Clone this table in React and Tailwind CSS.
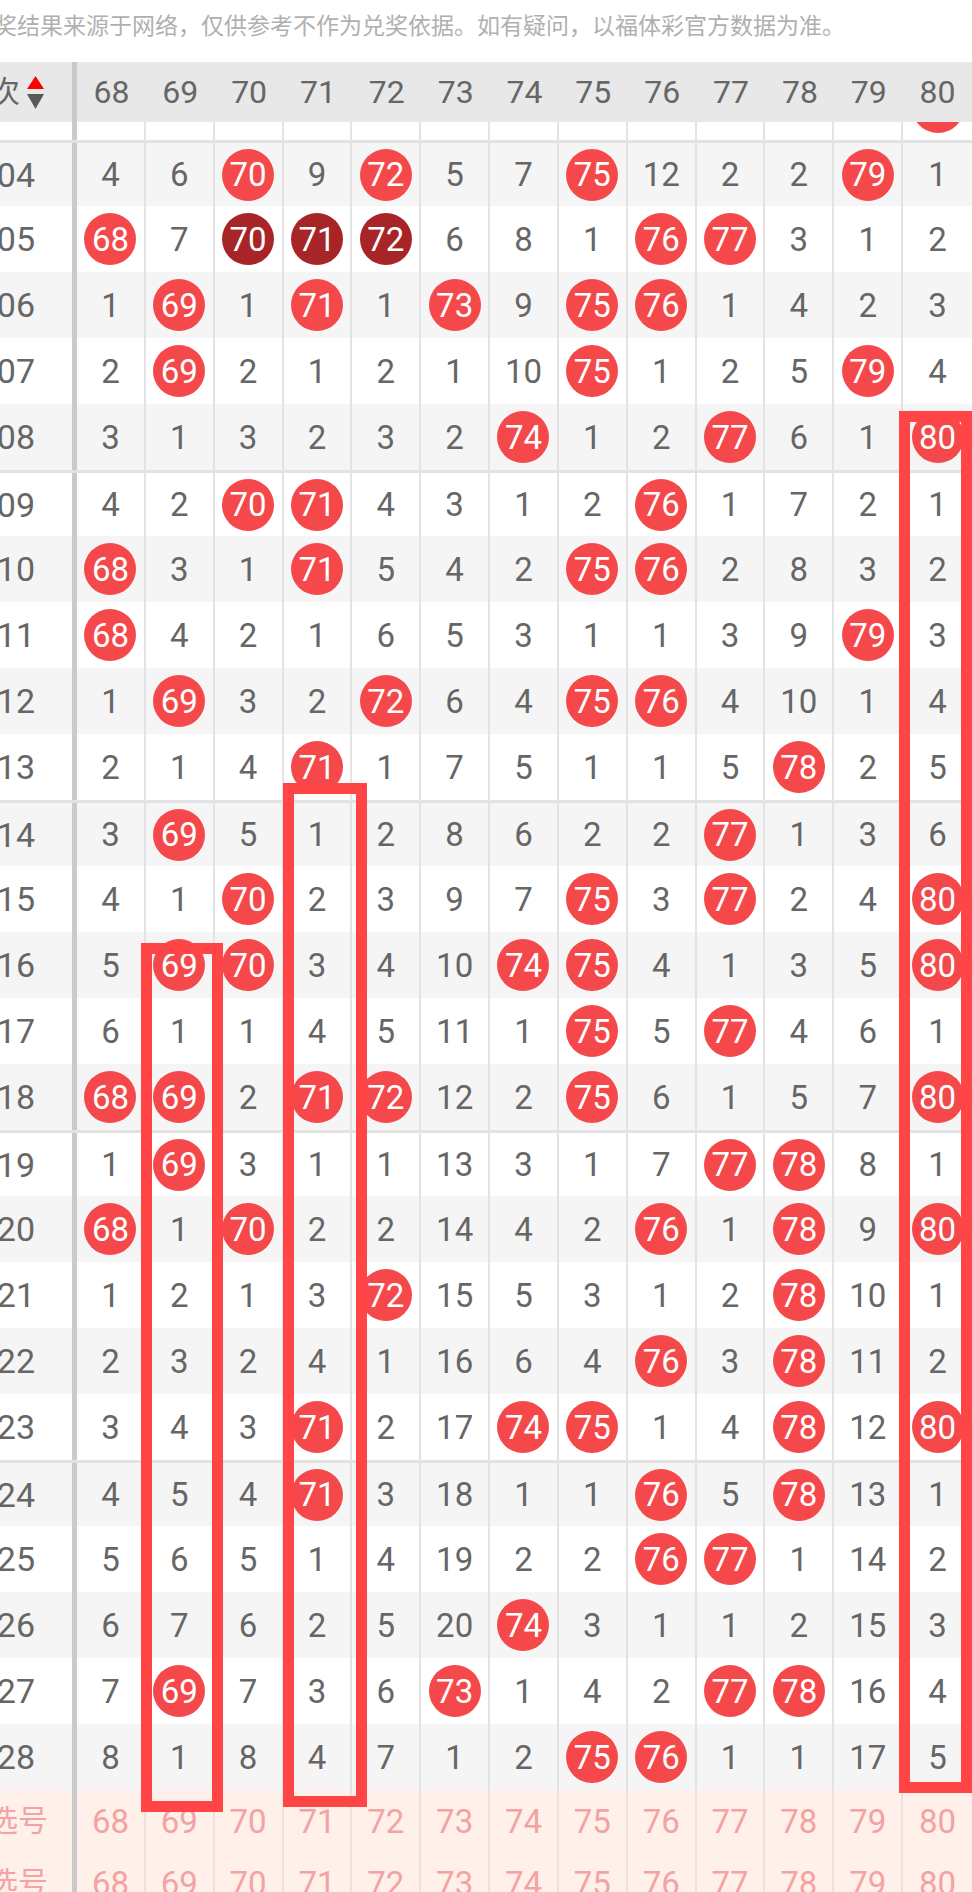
import React from "react";

const NUMS = [68, 69, 70, 71, 72, 73, 74, 75, 76, 77, 78, 79, 80];

const RAW = {
  3: "- - - - - - - - - - - - B",
  4: "4 6 B 9 B 5 7 B 12 2 2 B 1",
  5: "B 7 D D D 6 8 1 B B 3 1 2",
  6: "1 B 1 B 1 B 9 B B 1 4 2 3",
  7: "2 B 2 1 2 1 10 B 1 2 5 B 4",
  8: "3 1 3 2 3 2 B 1 2 B 6 1 B",
  9: "4 2 B B 4 3 1 2 B 1 7 2 1",
  10: "B 3 1 B 5 4 2 B B 2 8 3 2",
  11: "B 4 2 1 6 5 3 1 1 3 9 B 3",
  12: "1 B 3 2 B 6 4 B B 4 10 1 4",
  13: "2 1 4 B 1 7 5 1 1 5 B 2 5",
  14: "3 B 5 1 2 8 6 2 2 B 1 3 6",
  15: "4 1 B 2 3 9 7 B 3 B 2 4 B",
  16: "5 B B 3 4 10 B B 4 1 3 5 B",
  17: "6 1 1 4 5 11 1 B 5 B 4 6 1",
  18: "B B 2 B B 12 2 B 6 1 5 7 B",
  19: "1 B 3 1 1 13 3 1 7 B B 8 1",
  20: "B 1 B 2 2 14 4 2 B 1 B 9 B",
  21: "1 2 1 3 B 15 5 3 1 2 B 10 1",
  22: "2 3 2 4 1 16 6 4 B 3 B 11 2",
  23: "3 4 3 B 2 17 B B 1 4 B 12 B",
  24: "4 5 4 B 3 18 1 1 B 5 B 13 1",
  25: "5 6 5 1 4 19 2 2 B B 1 14 2",
  26: "6 7 6 2 5 20 B 3 1 1 2 15 3",
  27: "7 B 7 3 6 B 1 4 2 B B 16 4",
  28: "8 1 8 4 7 1 2 B B 1 1 17 5",
};

const FONT = "font-['Roboto','Noto_Sans_CJK_SC',sans-serif]";

function Cell({ v, num }) {
  let inner = null;
  if (v === "B") {
    inner = (
      <div className="flex h-[52px] w-[52px] items-center justify-center rounded-full bg-[#f5484b] text-[33px] leading-none text-white">
        {num}
      </div>
    );
  } else if (v === "D") {
    inner = (
      <div className="flex h-[52px] w-[52px] items-center justify-center rounded-full bg-[#a72526] text-[33px] leading-none text-white">
        {num}
      </div>
    );
  } else if (v !== "-") {
    inner = <span className="text-[33px] leading-none text-[#666666]">{v}</span>;
  }
  return (
    <div className="flex items-center justify-center border-r-2 border-[#e3e3e3] last:border-r-0">
      {inner}
    </div>
  );
}

function Row({ n }) {
  const vals = RAW[n].split(" ");
  const even = n % 2 === 0;
  const sep = n >= 4 && (n - 4) % 5 === 0;
  const label = "20250" + String(n).padStart(2, "0");
  return (
    <div
      className={`grid h-[66px] grid-cols-[77px_repeat(13,minmax(0,1fr))] ${
        even ? "bg-[#f5f5f5]" : "bg-white"
      } ${sep ? "border-t-[3px] border-[#e2e2e2]" : ""}`}
    >
      <div className="flex items-center justify-end overflow-hidden whitespace-nowrap border-r-[5px] border-[#cacaca] pr-[37px] text-[34px] leading-none text-[#666666]">
        {n > 3 ? label : ""}
      </div>
      {vals.map((v, i) => (
        <Cell key={i} v={v} num={NUMS[i]} />
      ))}
    </div>
  );
}

function PickRow() {
  return (
    <div className="grid h-[62px] grid-cols-[77px_repeat(13,minmax(0,1fr))] bg-[#fff0ea]">
      <div className="flex items-center justify-end overflow-hidden whitespace-nowrap border-r-[5px] border-[#cacaca] pr-[24px] text-[30px] leading-none text-[#f3a3a3]">
        选号
      </div>
      {NUMS.map((n) => (
        <div
          key={n}
          className="flex items-center justify-center border-r-2 border-[#ebe1de] text-[33px] leading-none text-[#f3a3a3] last:border-r-0"
        >
          {n}
        </div>
      ))}
    </div>
  );
}

export default function App() {
  const rowNums = [];
  for (let i = 3; i <= 28; i++) rowNums.push(i);
  return (
    <div className={`relative h-[1892px] w-[972px] overflow-hidden bg-white ${FONT}`}>
      <div className="h-[62px] overflow-hidden whitespace-nowrap pt-[12px] text-[23px] leading-[30px] text-[#b0b0b0]">
        <div className="-ml-[6px]">
          奖结果来源于网络，仅供参考不作为兑奖依据。如有疑问，以福体彩官方数据为准。
        </div>
      </div>

      <div className="grid h-[60px] grid-cols-[77px_repeat(13,minmax(0,1fr))] bg-[#e8e8e8]">
        <div className="flex items-center justify-end overflow-hidden whitespace-nowrap border-r-[5px] border-[#cacaca] pr-[28px]">
          <span className="text-[30px] leading-none text-[#666666]">期次</span>
          <div className="ml-[7px] flex flex-col items-center gap-[5px]">
            <svg width="17" height="13" viewBox="0 0 17 13">
              <polygon points="8.5,0 17,13 0,13" fill="#ff0000" />
            </svg>
            <svg width="17" height="15" viewBox="0 0 17 15">
              <polygon points="0,0 17,0 8.5,15" fill="#595959" />
            </svg>
          </div>
        </div>
        {NUMS.map((n) => (
          <div key={n} className="flex items-center justify-center text-[32px] leading-none text-[#666666]">
            {n}
          </div>
        ))}
      </div>

      <div className="overflow-hidden">
        <div className="-mt-[48px]">
          {rowNums.map((n) => (
            <Row key={n} n={n} />
          ))}
          <PickRow />
          <PickRow />
        </div>
      </div>

      <div className="absolute left-[141px] top-[943px] h-[869px] w-[82px] border-[11px] border-[#ff4545]" />
      <div className="absolute left-[283px] top-[783px] h-[1024px] w-[84px] border-[11px] border-[#ff4545]" />
      <div className="absolute left-[899px] top-[411px] h-[1382px] w-[73px] border-[11px] border-[#ff4545]" />
    </div>
  );
}
